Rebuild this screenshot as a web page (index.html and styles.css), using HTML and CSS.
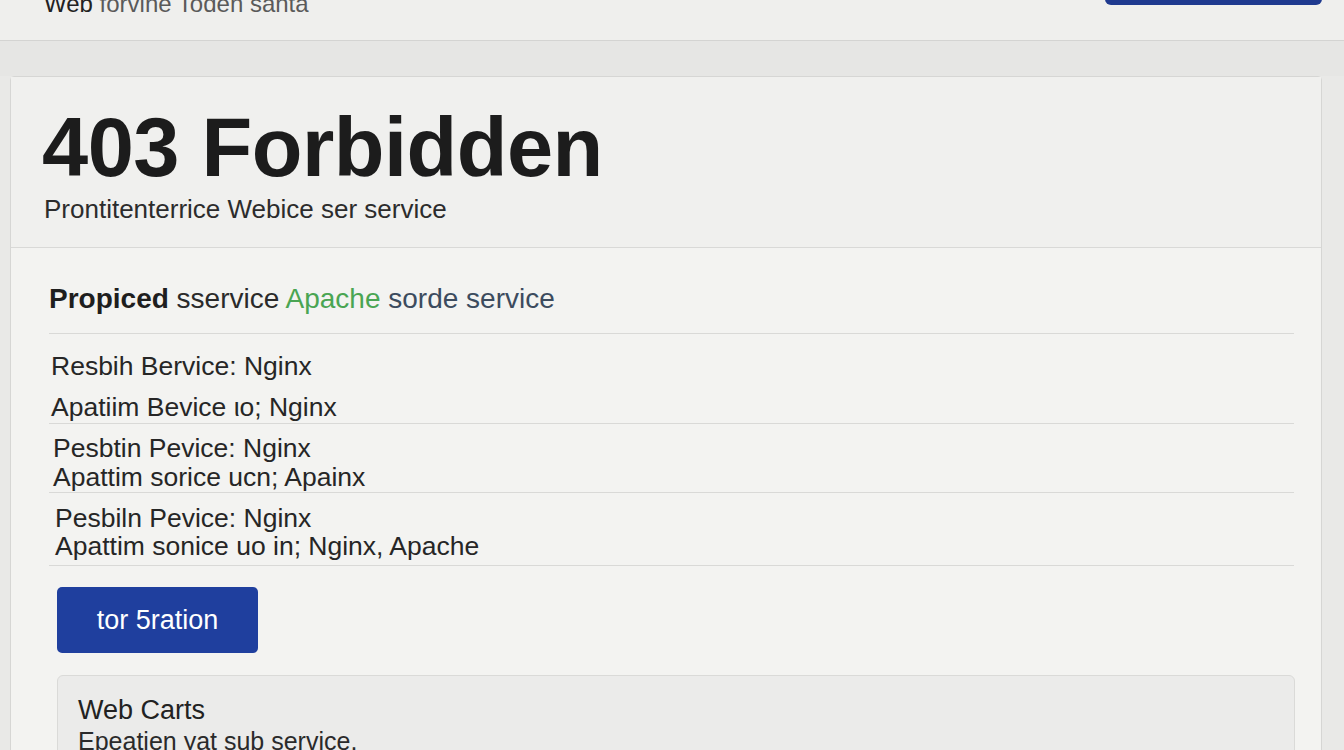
FILE: index.html
```html
<!DOCTYPE html>
<html lang="en">
<head>
<meta charset="utf-8">
<title>403 Forbidden</title>
<link rel="stylesheet" href="styles.css">
</head>
<body>
<header class="topbar">
  <div class="brand"><span class="brand-strong">Web</span> forvine Toden santa</div>
  <div class="top-btn"></div>
</header>
<div class="band"></div>
<main class="card">
  <section class="card-head">
    <h1 class="title">403 Forbidden</h1>
    <p class="subtitle">Prontitenterrice Webice ser service</p>
  </section>
  <section class="card-body">
    <p class="lead"><strong>Propiced</strong> sservice <span class="green">Apache</span> <span class="slate">sorde service</span></p>
    <div class="row row-a">
      <p>Resbih Bervice: Nginx</p>
      <p>Apatiim Bevice ιo; Nginx</p>
    </div>
    <div class="row row-b">
      <p>Pesbtin Pevice: Nginx</p>
      <p>Apattim sorice ucn; Apainx</p>
    </div>
    <div class="row row-c">
      <p>Pesbiln Pevice: Nginx</p>
      <p>Apattim sonice uo in; Nginx, Apache</p>
    </div>
    <button class="action">tor 5ration</button>
    <div class="inner">
      <p class="inner-title">Web Carts</p>
      <p class="inner-text">Epeatien yat sub service.</p>
    </div>
  </section>
</main>
</body>
</html>
```

FILE: styles.css
```css
html, body {
  margin: 0;
  padding: 0;
}
body {
  background: #e9e9e7;
  font-family: "Liberation Sans", Arial, sans-serif;
  color: #262626;
  height: 750px;
  overflow: hidden;
}
p { margin: 0; }

.topbar {
  height: 40px;
  background: #efefed;
  border-bottom: 1px solid #d4d4d2;
  display: flex;
  justify-content: space-between;
  align-items: flex-start;
  padding: 0 22px 0 44px;
}
.brand {
  font-size: 24px;
  line-height: 28px;
  margin-top: -10px;
  color: #5a5a5a;
}
.brand-strong {
  color: #222;
}
.top-btn {
  width: 217px;
  height: 30px;
  margin-top: -25px;
  background: #1f3a8f;
  border-radius: 6px;
}

.band {
  height: 35px;
  background: #e6e6e4;
}

.card {
  margin-left: 10px;
  width: 1310px;
  border: 1px solid #d6d6d4;
  border-radius: 4px 4px 0 0;
  background: #f3f3f1;
  min-height: 700px;
}
.card-head {
  background: #f0f0ee;
  border-bottom: 1px solid #d9d9d7;
  padding: 30px 30px 23px 31px;
}
.title {
  margin: 0;
  font-size: 83px;
  line-height: 82px;
  font-weight: 700;
  color: #1c1c1c;
  letter-spacing: -0.5px;
}
.subtitle {
  margin-top: 5px;
  font-size: 26px;
  line-height: 30px;
  color: #2c2c2c;
  padding-left: 2px;
}

.card-body {
  padding: 35px 27px 0 38px;
}
.lead {
  font-size: 28px;
  line-height: 32px;
  color: #2a2a2a;
  padding-bottom: 18px;
  border-bottom: 1px solid #d9d9d7;
}
.lead strong { color: #1e1e1e; }
.green { color: #4aa553; }
.slate { color: #3c4b5e; }

.row {
  border-bottom: 1px solid #d9d9d7;
  font-size: 26.5px;
  color: #262626;
  padding-left: 2px;
}
.row-a {
  line-height: 30px;
  padding-top: 17px;
  padding-bottom: 1px;
}
.row-a p + p {
  margin-top: 11px;
}
.row-b {
  line-height: 29px;
  padding-top: 10px;
  padding-left: 4px;
}
.row-c {
  line-height: 28px;
  padding-top: 11px;
  padding-bottom: 5px;
  padding-left: 6px;
}

.action {
  display: block;
  margin: 21px 0 0 8px;
  width: 201px;
  height: 66px;
  background: #1f3f9e;
  color: #ffffff;
  border: none;
  border-radius: 5px;
  font-family: "Liberation Sans", Arial, sans-serif;
  font-size: 27px;
  padding: 0;
}

.inner {
  margin: 22px 0 0 8px;
  width: 1216px;
  background: #ebebea;
  border: 1px solid #dadad8;
  border-radius: 6px;
  padding: 19px 0 0 20px;
  height: 120px;
}
.inner-title {
  font-size: 27px;
  line-height: 30px;
  color: #222;
}
.inner-text {
  margin-top: 2px;
  font-size: 25px;
  line-height: 28px;
  color: #2a2a2a;
}
```
